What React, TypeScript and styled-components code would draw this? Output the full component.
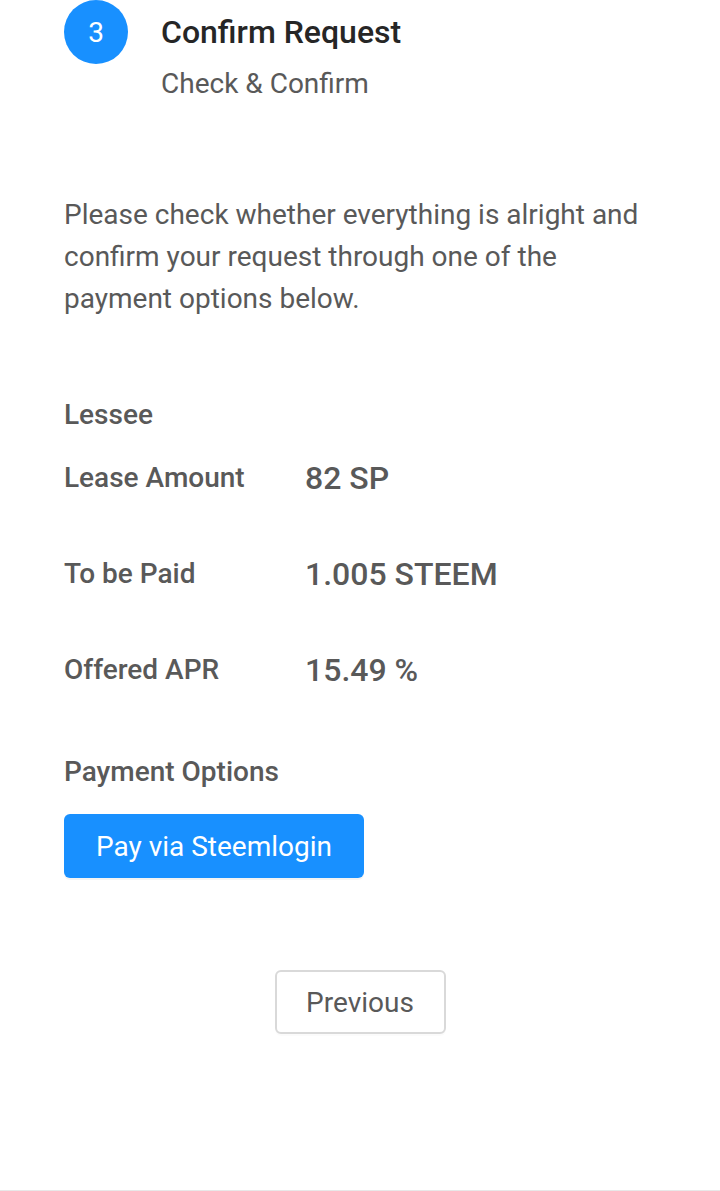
import React from "react";
import styled, { createGlobalStyle } from "styled-components";

const GlobalStyle = createGlobalStyle`
  html, body {
    margin: 0;
    padding: 0;
    background: #fff;
    font-family: Roboto, "Liberation Sans", sans-serif;
  }
`;

const Page = styled.div`
  width: 720px;
  height: 1191px;
  padding: 0 64px;
  box-sizing: border-box;
  border-bottom: 1px solid #e8e8e8;
`;

const Step = styled.div`
  display: flex;
  align-items: flex-start;
`;

const StepIcon = styled.div`
  width: 64px;
  height: 64px;
  border-radius: 50%;
  background: #1890ff;
  color: #fff;
  font-size: 28px;
  display: flex;
  align-items: center;
  justify-content: center;
  flex-shrink: 0;
`;

const StepBody = styled.div`
  margin-left: 33px;
`;

const StepTitle = styled.div`
  font-size: 32px;
  font-weight: 500;
  line-height: 64px;
  color: #262626;
`;

const StepDescription = styled.div`
  font-size: 28px;
  color: #595959;
  line-height: 40px;
`;

const Intro = styled.p`
  margin: 90px 0 0;
  font-size: 28px;
  line-height: 42px;
  color: #595959;
`;

const Section = styled.div`
  margin-top: 77px;
`;

const Label = styled.div`
  font-size: 28px;
  font-weight: 500;
  color: #595959;
  line-height: 36px;
`;

const Row = styled.div<{ $gap?: number }>`
  display: grid;
  grid-template-columns: 241px 1fr;
  align-items: center;
  margin-top: ${(p) => p.$gap ?? 60}px;
`;

const Value = styled.div`
  font-size: 32px;
  font-weight: 500;
  color: #595959;
  line-height: 36px;
`;

const PayButton = styled.button`
  margin-top: 24px;
  width: 300px;
  height: 64px;
  border: none;
  border-radius: 6px;
  background: #1890ff;
  color: #fff;
  font-family: inherit;
  font-size: 28px;
  box-shadow: 0 2px 0 rgba(0, 0, 0, 0.045);
`;

const Footer = styled.div`
  display: flex;
  justify-content: center;
  margin-top: 92px;
`;

const PrevButton = styled.button`
  width: 171px;
  height: 64px;
  background: #fff;
  border: 2px solid #d9d9d9;
  border-radius: 6px;
  color: #595959;
  font-family: inherit;
  font-size: 28px;
  box-shadow: 0 2px 0 rgba(0, 0, 0, 0.015);
`;

const rows = [
  { label: "Lease Amount", value: "82 SP" },
  { label: "To be Paid", value: "1.005 STEEM" },
  { label: "Offered APR", value: "15.49 %" },
];

const App: React.FC = () => {
  return (
    <>
      <GlobalStyle />
      <Page>
        <Step>
          <StepIcon>3</StepIcon>
          <StepBody>
            <StepTitle>Confirm Request</StepTitle>
            <StepDescription>Check &amp; Confirm</StepDescription>
          </StepBody>
        </Step>
        <Intro>
          Please check whether everything is alright and confirm your request
          through one of the payment options below.
        </Intro>
        <Section>
          <Label>Lessee</Label>
          {rows.map((r, i) => (
            <Row key={r.label} $gap={i === 0 ? 27 : 60}>
              <Label>{r.label}</Label>
              <Value>{r.value}</Value>
            </Row>
          ))}
          <Row $gap={66}>
            <Label>Payment Options</Label>
          </Row>
          <PayButton>Pay via Steemlogin</PayButton>
        </Section>
        <Footer>
          <PrevButton>Previous</PrevButton>
        </Footer>
      </Page>
    </>
  );
};

export default App;
